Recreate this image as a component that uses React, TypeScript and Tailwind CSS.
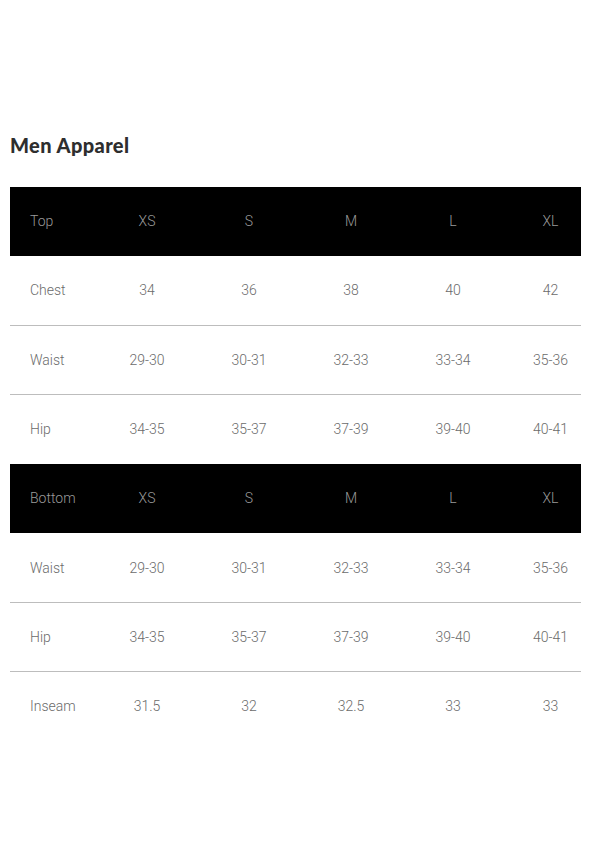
const sizes = ['XS', 'S', 'M', 'L', 'XL'];

const sections = [
  {
    title: 'Top',
    rows: [
      { label: 'Chest', values: ['34', '36', '38', '40', '42'] },
      { label: 'Waist', values: ['29-30', '30-31', '32-33', '33-34', '35-36'] },
      { label: 'Hip', values: ['34-35', '35-37', '37-39', '39-40', '40-41'] },
    ],
  },
  {
    title: 'Bottom',
    rows: [
      { label: 'Waist', values: ['29-30', '30-31', '32-33', '33-34', '35-36'] },
      { label: 'Hip', values: ['34-35', '35-37', '37-39', '39-40', '40-41'] },
      { label: 'Inseam', values: ['31.5', '32', '32.5', '33', '33'] },
    ],
  },
];

const grid = 'grid grid-cols-[86px_102px_102px_102px_102px_1fr] items-center';

function Row({ label, values, head, line }: { label: string; values: string[]; head?: boolean; line?: boolean }) {
  return (
    <div
      className={`${grid} h-[69.3px] ${head ? 'bg-black text-[#9a9a9a]' : 'text-[#6b6b6b]'} ${
        line ? 'border-b border-[#bdbdbd] pt-px' : ''
      }`}
    >
      <div className="pl-5">{label}</div>
      {values.map((v, i) => (
        <div key={i} className={`text-center ${i === 4 ? 'pl-4' : ''}`}>
          {v}
        </div>
      ))}
    </div>
  );
}

export default function App() {
  return (
    <div className="min-h-[860px] bg-white pt-[131px] px-[10px] pr-2" style={{ fontFamily: 'Roboto, "Liberation Sans", sans-serif' }}>
      <h1
        className="text-[20px] font-black text-[#2e2e2e] tracking-[0.4px] leading-7 mb-[28px]"
        style={{ fontFamily: 'Lato, "Liberation Sans", sans-serif' }}
      >
        Men Apparel
      </h1>
      <div className="text-[14px] font-light">
        {sections.map((s) => (
          <div key={s.title}>
            <Row label={s.title} values={sizes} head />
            {s.rows.map((r, i) => (
              <Row key={r.label} label={r.label} values={r.values} line={i < s.rows.length - 1} />
            ))}
          </div>
        ))}
      </div>
    </div>
  );
}
